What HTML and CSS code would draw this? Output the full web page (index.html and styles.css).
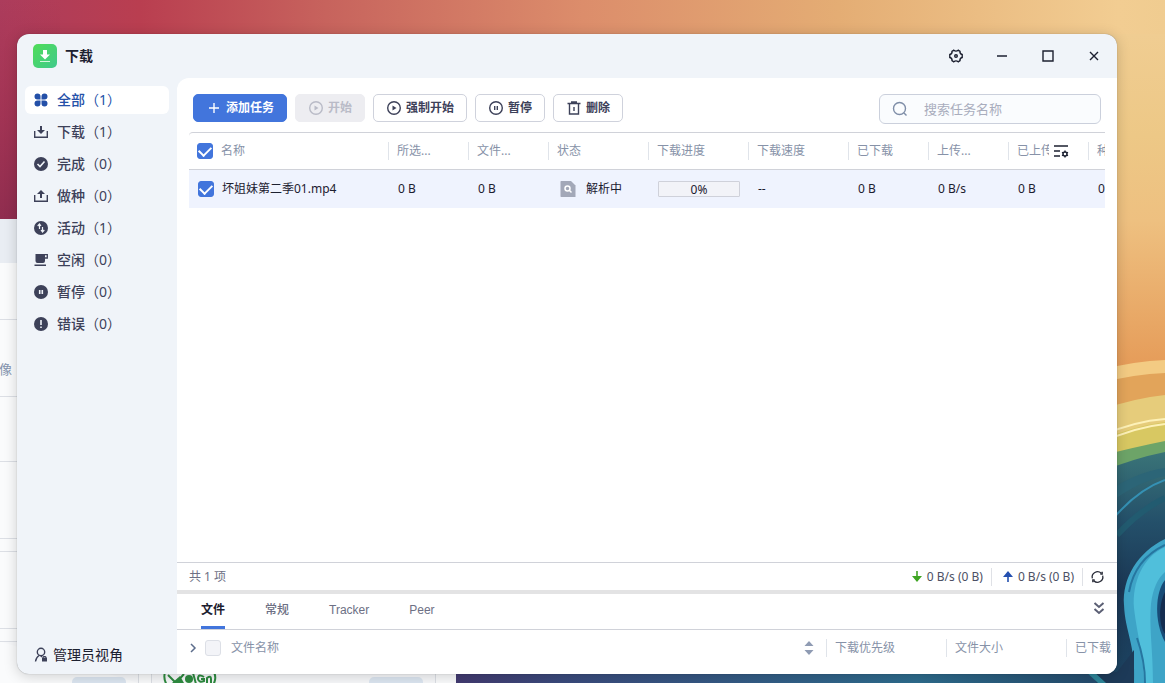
FILE: index.html
```html
<!DOCTYPE html>
<html lang="zh-CN">
<head>
    <meta charset="UTF-8">
    <meta name="viewport" content="width=device-width, initial-scale=1.0">
    <title>下载</title>
    <link rel="stylesheet" href="styles.css">
</head>
<body>
    <svg class="wallpaper" viewBox="0 0 1165 683" preserveAspectRatio="xMidYMid slice" aria-hidden="true">
        <defs>
            <linearGradient id="sky">
                <stop offset="0" stop-color="#ac3c5c"/>
                <stop offset="0.12" stop-color="#b93e50"/>
                <stop offset="0.28" stop-color="#c7635d"/>
                <stop offset="0.5" stop-color="#dc8d6b"/>
                <stop offset="0.72" stop-color="#e4ad74"/>
                <stop offset="0.96" stop-color="#f2cd92"/>
                <stop offset="1" stop-color="#f0cc90"/>
            </linearGradient>
            <linearGradient id="wine" x2="0" y2="1">
                <stop offset="0" stop-color="#a02c4c" stop-opacity="0"/>
                <stop offset="1" stop-color="#8f2d4f"/>
            </linearGradient>
            <linearGradient id="dusk" x2="0" y2="1">
                <stop offset="0" stop-color="#f0cd92"/>
                <stop offset="0.3" stop-color="#edc886"/>
                <stop offset="0.55" stop-color="#eec080"/>
                <stop offset="1" stop-color="#e59a57"/>
            </linearGradient>
            <linearGradient id="sea">
                <stop offset="0" stop-color="#423a70"/>
                <stop offset="0.15" stop-color="#3a4a7c"/>
                <stop offset="0.65" stop-color="#2d6b8c"/>
                <stop offset="0.92" stop-color="#24496a"/>
                <stop offset="1" stop-color="#1d3a58"/>
            </linearGradient>
            <linearGradient id="deep" x2="0" y2="1">
                <stop offset="0" stop-color="#3a7478"/>
                <stop offset="0.3" stop-color="#24506a"/>
                <stop offset="0.6" stop-color="#1b3755"/>
                <stop offset="1" stop-color="#1d4563"/>
            </linearGradient>
        </defs>
        <rect width="1165" height="683" fill="url(#sky)"/>
        <rect width="60" height="220" fill="url(#wine)"/>
        <rect x="1100" y="34" width="65" height="340" fill="url(#dusk)"/>
        <rect x="456" y="660" width="709" height="23" fill="url(#sea)"/>
        <path d="M1100 370Q1135 361 1165 360V384Q1135 380 1100 384Z" fill="#f3cb83"/>
        <path d="M1100 383Q1135 374 1165 373V420H1100Z" fill="#e2a45a"/>
        <path d="M1100 410Q1135 398 1165 395V450H1100Z" fill="#e6cc7b"/>
        <path d="M1100 440Q1135 426 1165 422V475H1100Z" fill="#d8c862"/>
        <path d="M1100 436Q1135 421 1165 419M1100 443Q1135 427 1165 424" fill="none" stroke="#fdf1b8" stroke-width="2"/>
        <path d="M1100 456Q1135 447 1165 441V480H1100Z" fill="#6da468"/>
        <path d="M1100 472Q1135 458 1165 452V683H1100Z" fill="url(#deep)"/>
        <path d="M1100 496Q1135 472 1165 468V476Q1135 482 1100 510Z" fill="#2c6577"/>
        <path d="M1112 520Q1137 490 1165 480" fill="none" stroke="#3591b4" stroke-width="2"/>
        <path d="M1117 535Q1140 510 1165 498" fill="none" stroke="#225b70" stroke-width="6"/>
        <path d="M1165 539C1138 552 1122 578 1124 605C1125 632 1136 645 1134 683H1165Z" fill="#3ea4c7"/>
        <path d="M1165 547C1143 557 1132 582 1134 608C1137 635 1143 650 1144 683H1153C1153 650 1149 628 1151 604C1153 588 1158 578 1165 572Z" fill="#50bfdb"/>
        <path d="M1129 592C1133 570 1144 555 1165 545M1137 638C1143 655 1145 668 1145 683" fill="none" stroke="#2676a0" stroke-width="2"/>
        <path d="M1165 580C1155 592 1154 622 1165 642Z" fill="#184c77"/>
        <path d="M1165 592C1158 605 1159 626 1165 634Z" fill="#142d50"/>
        <path d="M1085 672Q1093 676 1097 683H1134V650L1117 672Z" fill="#1d3a58"/>
        <path d="M1084 670L1098 683H1106L1092 670Z" fill="#2e869a"/>

        <rect y="219" width="456" height="464" fill="#fafbfc"/>
        <rect y="219" width="456" height="44" fill="#e9edf3"/>
        <path d="M0 319.500H30M0 396.500H30M0 461.500H30M0 538.500H30M0 551.500H30M0 628.500H30M0 641.500H138.500V683M151.500 683V641.500H435.500V683" fill="#f7f8fa" stroke="#dcdfe5"/>
        <text class="wallpaper-text" x="-1" y="374">像</text>
        <rect x="72" y="677" width="54" height="20" rx="5" fill="#dce6f1"/>
        <rect x="369" y="677" width="54" height="20" rx="5" fill="#dce6f1"/>
        <g fill="none" stroke="#2e8b40" stroke-width="2">
            <path d="M165 672Q163 679 167 685M214 672Q217 679 213 685M168 675L176 683L184 674M193 673L196 684"/>
            <path d="M204 677Q198 673 198 679Q199 683 204 681V679H201M207 684V678Q211 675 211 679V684"/>
        </g>
        <circle cx="189" cy="679" r="4" fill="#2e8b40"/>
        <path d="M172 683L180 676L184 683Z" fill="#2e8b40"/>
    </svg>

    <div class="window">
        <header class="titlebar">
            <svg class="app-logo" viewBox="0 0 24 24" aria-hidden="true">
                <defs>
                    <linearGradient id="logo" x2="1" y2="1">
                        <stop offset="0" stop-color="#50dd58"/>
                        <stop offset="1" stop-color="#40c98c"/>
                    </linearGradient>
                </defs>
                <rect width="24" height="24" rx="5" fill="url(#logo)"/>
                <path d="M10 6H14V10.500H17L12 15.500L7 10.500H10Z" fill="#fff"/>
                <path d="M7 17.500H17" stroke="#d5f7df"/>
            </svg>
            <h1 class="app-title">下载</h1>
            <div class="window-controls">
                <button type="button" class="window-btn" aria-label="设置">
                    <svg class="icon" viewBox="0 0 16 16"><path d="M5.800 2.200Q8 4 10.200 2.200L12 3.300Q11.600 5.800 14.200 6.500V9.500Q11.600 10.200 12 12.700L10.200 13.800Q8 12 5.800 13.800L4 12.700Q4.400 10.200 1.800 9.500V6.500Q4.400 5.800 4 3.300Z"/><circle cx="8" cy="8" r="1.300"/></svg>
                </button>
                <button type="button" class="window-btn" aria-label="最小化">
                    <svg class="icon" viewBox="0 0 16 16"><path d="M3 8H13"/></svg>
                </button>
                <button type="button" class="window-btn" aria-label="最大化">
                    <svg class="icon" viewBox="0 0 16 16"><path d="M3 3H13V13H3Z"/></svg>
                </button>
                <button type="button" class="window-btn" aria-label="关闭">
                    <svg class="icon" viewBox="0 0 16 16"><path d="M4 4L12 12M12 4L4 12"/></svg>
                </button>
            </div>
        </header>

        <div class="body">
            <aside class="sidebar">
                <nav class="nav">
                    <a href="#all" class="nav-item active">
                        <svg class="nav-icon" viewBox="0 0 16 16"><path d="M4.500 1.500A3 3 0 0 1 7.500 4.500V7.500H4.500A3 3 0 0 1 4.500 1.500ZM11.500 1.500A3 3 0 0 1 11.500 7.500H8.500V4.500A3 3 0 0 1 11.500 1.500ZM4.500 8.500H7.500V11.500A3 3 0 1 1 4.500 8.500ZM8.500 8.500H11.500A3 3 0 1 1 8.500 11.500Z"/></svg>
                        <span>全部<span class="count">（1）</span></span>
                    </a>
                    <a href="#downloading" class="nav-item">
                        <svg class="nav-icon" viewBox="0 0 16 16"><path d="M7 2H9V6H12L8 10L4 6H7Z"/><path d="M1.700 7V13.300H14.300V7" fill="none" stroke="currentColor" stroke-width="1.400"/></svg>
                        <span>下载<span class="count">（1）</span></span>
                    </a>
                    <a href="#completed" class="nav-item">
                        <svg class="nav-icon" viewBox="0 0 16 16"><circle cx="8" cy="8" r="7"/><path class="cut" d="M4.500 8L7 10.500L11.500 5.500"/></svg>
                        <span>完成<span class="count">（0）</span></span>
                    </a>
                    <a href="#seeding" class="nav-item">
                        <svg class="nav-icon" viewBox="0 0 16 16"><path d="M7 10H9V6H12L8 2L4 6H7Z"/><path d="M1.700 7V13.300H14.300V7" fill="none" stroke="currentColor" stroke-width="1.400"/></svg>
                        <span>做种<span class="count">（0）</span></span>
                    </a>
                    <a href="#active" class="nav-item">
                        <svg class="nav-icon" viewBox="0 0 16 16"><circle cx="8" cy="8" r="7"/><path class="cut thin" d="M6.500 9V4.500M4.700 6L6.500 4L8 6M9.500 7V11.500M8 10L9.500 12L11.300 10"/></svg>
                        <span>活动<span class="count">（1）</span></span>
                    </a>
                    <a href="#idle" class="nav-item">
                        <svg class="nav-icon" viewBox="0 0 16 16"><path d="M2.500 2H12V9Q12 11 10 11H4.500Q2.500 11 2.500 9ZM1.500 12.500H13V14H1.500Z"/><path d="M12 2.700H14.300V6H12" fill="none" stroke="currentColor" stroke-width="1.300"/></svg>
                        <span>空闲<span class="count">（0）</span></span>
                    </a>
                    <a href="#paused" class="nav-item">
                        <svg class="nav-icon" viewBox="0 0 16 16"><circle cx="8" cy="8" r="7"/><path class="cut" d="M6.700 6V10M9.300 6V10"/></svg>
                        <span>暂停<span class="count">（0）</span></span>
                    </a>
                    <a href="#error" class="nav-item">
                        <svg class="nav-icon" viewBox="0 0 16 16"><circle cx="8" cy="8" r="7"/><path class="cut" d="M8 4V9M8 10.500V12"/></svg>
                        <span>错误<span class="count">（0）</span></span>
                    </a>
                </nav>
                <button type="button" class="role">
                    <svg class="icon" viewBox="0 0 16 16"><circle cx="8" cy="5" r="3.700"/><path d="M6 8.500Q3 10.500 2.500 14.500M8 9L9 10"/><path d="M9 10.500H14V14.500H9Z" fill="currentColor" stroke="none"/><path d="M10.200 11V9.500H12.800V11" stroke-width="1"/></svg>
                    管理员视角
                </button>
            </aside>

            <main class="panel">
                <div class="toolbar">
                    <button type="button" class="btn btn-primary">
                        <svg class="icon" viewBox="0 0 16 16"><path d="M8 3V13M3 8H13"/></svg>
                        添加任务
                    </button>
                    <button type="button" class="btn" disabled>
                        <svg class="icon" viewBox="0 0 16 16"><circle cx="8" cy="8" r="6.300"/><path d="M6.500 5.500V10.500L10.500 8Z" fill="currentColor" stroke="none"/></svg>
                        开始
                    </button>
                    <button type="button" class="btn">
                        <svg class="icon" viewBox="0 0 16 16"><circle cx="8" cy="8" r="6.300"/><path d="M6.500 5.500V10.500L10.500 8Z" fill="currentColor" stroke="none"/></svg>
                        强制开始
                    </button>
                    <button type="button" class="btn">
                        <svg class="icon" viewBox="0 0 16 16"><circle cx="8" cy="8" r="6.300"/><path d="M6.700 6V10M9.300 6V10"/></svg>
                        暂停
                    </button>
                    <button type="button" class="btn">
                        <svg class="icon" viewBox="0 0 16 16"><path d="M1.500 3.500H14.500M5 2H11M3.500 4V14H12.500V4M8 7V11"/></svg>
                        删除
                    </button>
                    <label class="search">
                        <svg class="icon" viewBox="0 0 16 16"><circle cx="7.500" cy="7.500" r="6"/><path d="M12 12L14.500 14.500"/></svg>
                        <input type="search" placeholder="搜索任务名称" aria-label="搜索任务名称">
                    </label>
                </div>

                <div class="tasks">
                    <table class="task-table">
                        <colgroup>
                            <col class="col-name">
                            <col class="col-s">
                            <col class="col-s">
                            <col class="col-m">
                            <col class="col-m">
                            <col class="col-m">
                            <col class="col-s">
                            <col class="col-s">
                            <col class="col-s">
                            <col class="col-s">
                        </colgroup>
                        <thead>
                            <tr>
                                <th><label class="check"><input type="checkbox" checked>名称</label></th>
                                <th>所选...</th>
                                <th>文件...</th>
                                <th>状态</th>
                                <th>下载进度</th>
                                <th>下载速度</th>
                                <th>已下载</th>
                                <th>上传...</th>
                                <th>已上传</th>
                                <th>种</th>
                            </tr>
                        </thead>
                        <tbody>
                            <tr>
                                <td><label class="check"><input type="checkbox" checked>坏姐妹第二季01.mp4</label></td>
                                <td>0 B</td>
                                <td>0 B</td>
                                <td>
                                    <span class="state">
                                        <svg class="state-icon" viewBox="0 0 16 16"><path d="M1 0H11L15.500 4.500V16H1Q0.500 16 0.500 15V1Q0.500 0 1 0Z" fill="#a3a8b8"/><circle cx="7.500" cy="7.500" r="2.500" fill="none" stroke="#fff" stroke-width="1.500"/><path d="M9.500 9.500L11.500 11.500" stroke="#fff" stroke-width="1.500"/></svg>
                                        解析中
                                    </span>
                                </td>
                                <td><div class="progress" role="progressbar" aria-valuenow="0">0%</div></td>
                                <td>--</td>
                                <td>0 B</td>
                                <td>0 B/s</td>
                                <td>0 B</td>
                                <td>0</td>
                            </tr>
                        </tbody>
                    </table>
                    <button type="button" class="column-btn" aria-label="列设置">
                        <svg class="icon" viewBox="0 0 16 16"><path d="M1 3H15M1 8H7M1 13H7"/><circle cx="12" cy="11" r="2"/><path d="M12 7.500V9M12 13V14.500M9 9.300L10.300 10M13.700 12L15 12.700M9 12.700L10.300 12M13.700 10L15 9.300"/></svg>
                    </button>
                </div>

                <footer class="status">
                    <span class="total">共 1 项</span>
                    <span class="speed">
                        <svg class="arrow down" viewBox="0 0 16 16"><path d="M7.200 2H8.800V7H13L8 13L3 7H7.200Z"/></svg>
                        0 B/s (0 B)
                    </span>
                    <span class="speed">
                        <svg class="arrow up" viewBox="0 0 16 16"><path d="M7.200 13H8.800V8H13L8 2L3 8H7.200Z"/></svg>
                        0 B/s (0 B)
                    </span>
                    <button type="button" class="refresh" aria-label="刷新">
                        <svg class="icon" viewBox="0 0 16 16"><path d="M2.500 9.500A5.700 5.700 0 0 1 12 4M13.500 6.500A5.700 5.700 0 0 1 4 12M13 2.500V5H11M3 13.500V11H5"/></svg>
                    </button>
                </footer>

                <section class="details">
                    <div class="tabs" role="tablist">
                        <button type="button" class="tab selected" role="tab" aria-selected="true">文件</button>
                        <button type="button" class="tab" role="tab">常规</button>
                        <button type="button" class="tab" role="tab">Tracker</button>
                        <button type="button" class="tab" role="tab">Peer</button>
                        <button type="button" class="collapse" aria-label="收起">
                            <svg class="icon" viewBox="0 0 16 16"><path d="M3.500 3L8 7L12.500 3M3.500 9L8 13L12.500 9"/></svg>
                        </button>
                    </div>
                    <table class="file-table">
                        <colgroup>
                            <col>
                            <col class="col-l">
                            <col class="col-l">
                            <col class="col-end">
                        </colgroup>
                        <thead>
                            <tr>
                                <th>
                                    <div class="file-name">
                                        <svg class="chevron" viewBox="0 0 8 16"><path d="M2 4L6 8L2 12"/></svg>
                                        <label class="check"><input type="checkbox" disabled>文件名称</label>
                                        <svg class="sort" viewBox="0 0 16 16"><path d="M8 1L12.500 6H3.500Z"/><path d="M8 15L12.500 10H3.500Z"/></svg>
                                    </div>
                                </th>
                                <th>下载优先级</th>
                                <th>文件大小</th>
                                <th>已下载</th>
                            </tr>
                        </thead>
                    </table>
                </section>
            </main>
        </div>
    </div>
</body>
</html>
```

FILE: styles.css
```css
* {
    box-sizing: border-box;
}

body {
    margin: 0;
    height: 100vh;
    padding: 34px 48px 9px 17px;
    overflow: hidden;
    font-family: "Noto Sans", "Noto Sans CJK SC", sans-serif;
    font-size: 12px;
    line-height: 16px;
    color: #1c2030;
}

button,
input {
    font: inherit;
    color: inherit;
}

button {
    padding: 0;
    border: 0;
    background: none;
}

svg {
    flex: none;
}

/* Desktop behind the window */
.wallpaper {
    position: absolute;
    top: 0;
    left: 0;
    width: 100%;
    height: 100%;
}

.wallpaper-text {
    font-size: 13px;
    fill: #8494ae;
}

.icon {
    display: block;
    width: 16px;
    height: 16px;
    fill: none;
    stroke: currentColor;
    stroke-width: 1.4;
}

/* Window */
.window {
    position: relative;
    display: flex;
    flex-direction: column;
    height: 100%;
    border-radius: 12px;
    overflow: hidden;
    background: #f0f4f9;
    box-shadow: 0 0 1px rgba(0, 0, 0, 0.4), 0 2px 14px rgba(0, 0, 0, 0.18);
}

.titlebar {
    display: flex;
    align-items: center;
    height: 44px;
    padding-left: 16px;
}

.app-logo {
    width: 24px;
    height: 24px;
}

.app-title {
    margin: 0 0 0 8px;
    font-size: 14px;
    font-weight: 700;
}

.window-controls {
    display: flex;
    margin-left: auto;
}

.window-btn {
    display: flex;
    align-items: center;
    justify-content: center;
    width: 46px;
    height: 44px;
}

.body {
    display: flex;
    flex: 1;
    min-height: 0;
}

/* Sidebar */
.sidebar {
    display: flex;
    flex-direction: column;
    justify-content: space-between;
    flex: none;
    width: 160px;
    padding: 8px;
}

.nav {
    display: flex;
    flex-direction: column;
    gap: 4px;
}

.nav-item {
    display: flex;
    align-items: center;
    gap: 8px;
    height: 28px;
    padding-left: 8px;
    border-radius: 6px;
    font-size: 14px;
    font-weight: 500;
    color: #3d4159;
    text-decoration: none;
}

.nav-item.active {
    background: #fff;
    color: #2450a8;
}

.count {
    font-weight: 400;
}

.nav-icon {
    width: 16px;
    height: 16px;
    fill: currentColor;
}

.cut {
    fill: none;
    stroke: #f0f4f9;
    stroke-width: 1.6;
}

.cut.thin {
    stroke-width: 1.2;
}

.role {
    display: flex;
    align-items: center;
    gap: 4px;
    height: 22px;
    padding-left: 8px;
    font-size: 14px;
}

.role .icon {
    color: #3d4159;
}

/* Main panel */
.panel {
    display: flex;
    flex-direction: column;
    flex: 1;
    min-width: 0;
    border-top-left-radius: 12px;
    background: #fff;
}

.toolbar {
    display: flex;
    gap: 8px;
    padding: 16px 16px 8px;
}

.btn {
    display: flex;
    align-items: center;
    gap: 4px;
    height: 28px;
    padding: 0 12px;
    border: 1px solid #cfd2dc;
    border-radius: 5px;
    background: #fff;
    color: #3d4159;
    font-weight: 700;
    white-space: nowrap;
}

.btn-primary {
    border-color: #4275dc;
    background: #4275dc;
    color: #fff;
}

.btn:disabled {
    border-color: #ededf1;
    background: #ededf1;
    color: #b9bbc7;
}

.search {
    display: flex;
    align-items: center;
    gap: 16px;
    width: 222px;
    height: 30px;
    margin-left: auto;
    padding: 0 12px;
    border: 1px solid #cbd0dc;
    border-radius: 6px;
    background: #fafcfe;
    color: #7f8ea8;
}

.search input {
    flex: 1;
    min-width: 0;
    padding: 0;
    border: 0;
    outline: 0;
    background: none;
    font-size: 13px;
}

.search input::placeholder {
    color: #a9adbd;
}

/* Tables */
table {
    table-layout: fixed;
    border-collapse: separate;
    border-spacing: 0;
}

th,
td {
    padding: 0 0 0 8px;
    text-align: left;
    white-space: nowrap;
}

th {
    color: #8792a8;
    font-weight: 400;
    background: linear-gradient(#e0e4ea, #e0e4ea) right center / 1px 18px no-repeat;
}

.check {
    display: flex;
    align-items: center;
    gap: 8px;
}

.check input {
    appearance: none;
    flex: none;
    width: 16px;
    height: 16px;
    margin: 0;
    border: 1px solid #dcdfe6;
    border-radius: 3px;
    background: #f3f4f8;
}

.check input:checked {
    display: flex;
    align-items: center;
    justify-content: center;
    border-color: #4275dc;
    background: #4275dc;
}

.check input:checked::before {
    content: "";
    width: 10px;
    height: 6px;
    margin-bottom: 3px;
    border: solid #fff;
    border-width: 0 0 2px 2px;
    transform: rotate(-45deg);
}

.tasks {
    position: relative;
    flex: 1;
    min-height: 0;
    margin: 0 12px;
    border-top: 1px solid #d0d2d9;
    border-top-left-radius: 4px;
    overflow: hidden;
}

.task-table {
    width: 980px;
}

.task-table th {
    height: 37px;
    border-bottom: 1px solid #d0d2d9;
}

.task-table td {
    height: 38px;
    padding-left: 9px;
    background: #eff3fe;
}

.col-name {
    width: 200px;
}

.col-s {
    width: 80px;
}

.col-m {
    width: 100px;
}

.state {
    display: flex;
    align-items: center;
    gap: 10px;
    padding-left: 2px;
}

.state-icon {
    width: 16px;
    height: 16px;
}

.progress {
    width: 82px;
    height: 16px;
    border: 1px solid #cfd1da;
    border-radius: 1px;
    background: #f2f3f8;
    line-height: 16px;
    text-align: center;
}

/* Sits over the last visible header cells */
.column-btn {
    position: absolute;
    top: 8px;
    right: 32px;
    display: flex;
    align-items: center;
    justify-content: center;
    width: 24px;
    height: 20px;
    background: #fff;
}

/* Status line */
.status {
    display: flex;
    align-items: center;
    height: 32px;
    padding: 0 12px;
    border-top: 1px solid #d0d2d9;
    border-bottom: 4px solid #e3e3e4;
    color: #4c5064;
}

.total {
    margin-right: auto;
    color: #6d7084;
}

.speed {
    display: flex;
    align-items: center;
    gap: 2px;
    height: 18px;
    padding: 0 8px;
    border-right: 1px solid #dfe1e6;
}

.arrow {
    width: 16px;
    height: 16px;
}

.arrow.down {
    fill: #3fa523;
}

.arrow.up {
    fill: #2450b0;
}

.refresh {
    padding-left: 7px;
    color: #292c38;
}

.refresh .icon {
    width: 15px;
}

/* Details */
.details {
    padding-bottom: 8px;
}

.tabs {
    display: flex;
    align-items: stretch;
    gap: 40px;
    height: 36px;
    padding: 0 10px 0 24px;
    border-bottom: 1px solid #d0d2d9;
    font-family: "Liberation Sans", "Noto Sans CJK SC", sans-serif;
}

.tab {
    padding-bottom: 1px;
    border-bottom: 3px solid transparent;
    color: #6d7084;
    font-weight: 500;
}

.tab.selected {
    border-color: #4275dc;
    color: #1c2030;
    font-weight: 700;
}

.collapse {
    margin-left: auto;
    padding-bottom: 8px;
    color: #5c6075;
}

.collapse .icon {
    stroke-width: 2;
}

.file-table {
    width: 100%;
}

.file-table th {
    height: 36px;
}

.file-table th:last-child {
    background: none;
}

.file-table th:first-child {
    padding-left: 12px;
}

.col-l {
    width: 120px;
}

.col-end {
    width: 50px;
}

.file-name {
    display: flex;
    align-items: center;
    gap: 8px;
    padding-right: 10px;
}

.file-name .check {
    gap: 10px;
}

.chevron {
    width: 8px;
    height: 16px;
    fill: none;
    stroke: #5c6d8c;
    stroke-width: 1.5;
}

.sort {
    width: 16px;
    height: 16px;
    margin-left: auto;
    fill: #8f9bb3;
}
```
